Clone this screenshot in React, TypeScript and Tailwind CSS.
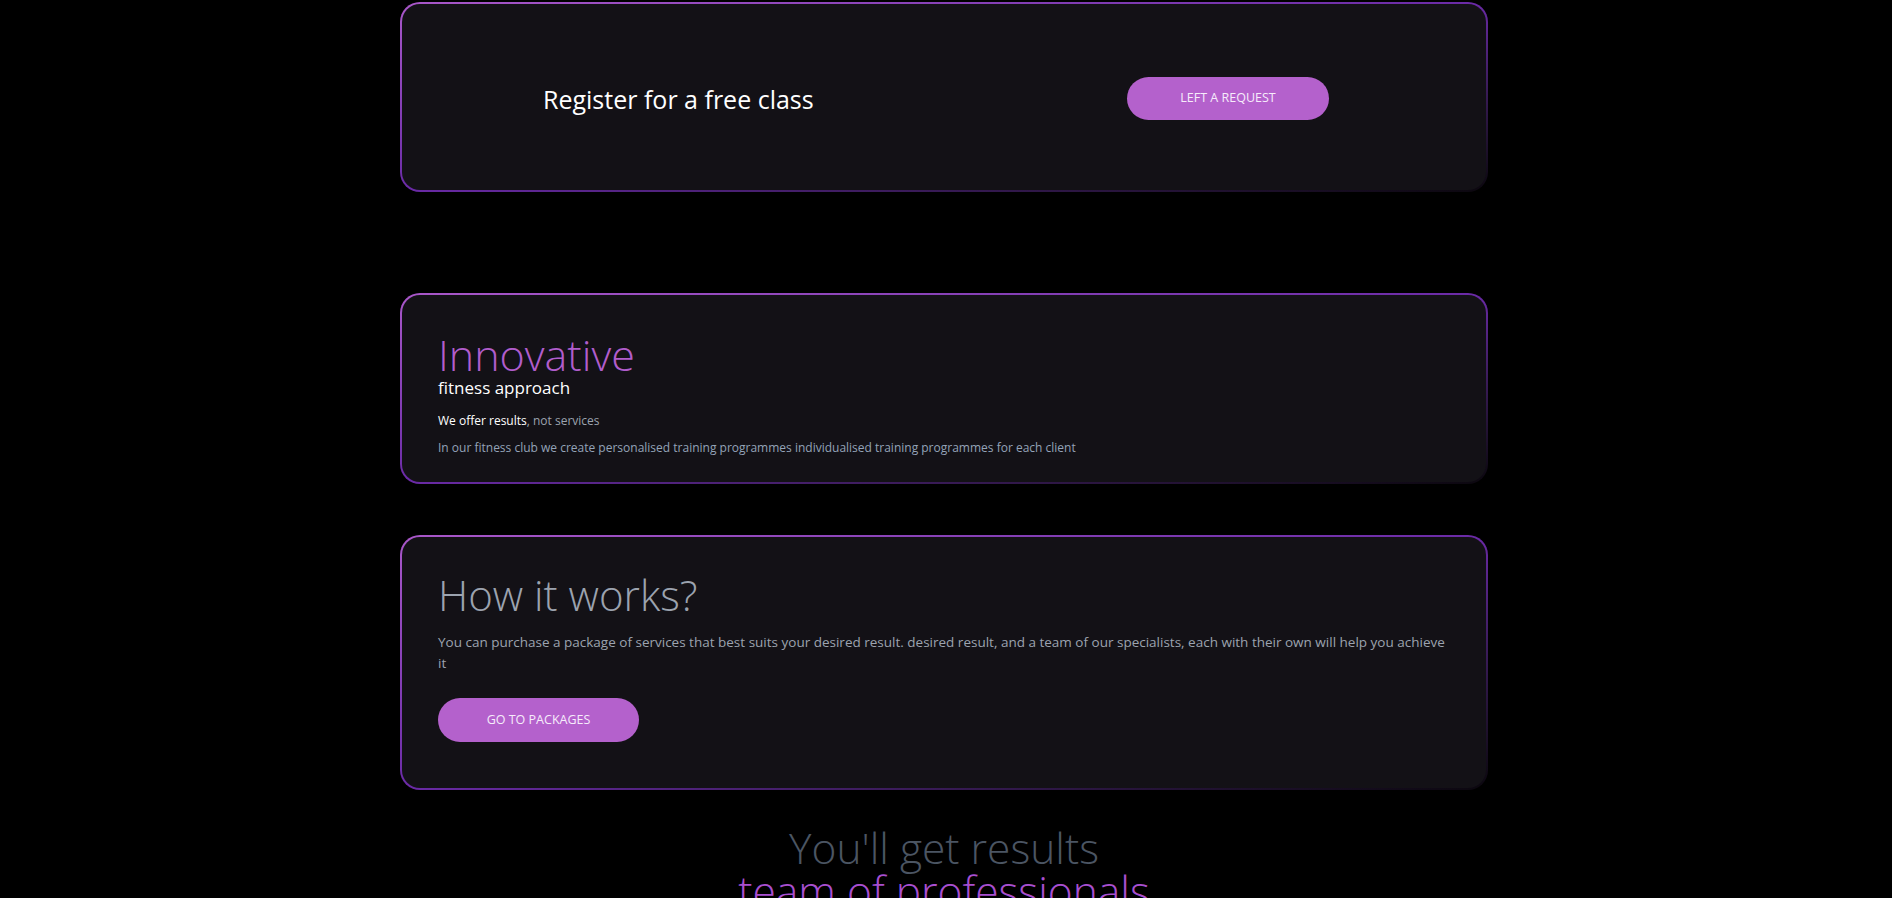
import React from "react";

const font = { fontFamily: '"Open Sans", "Noto Sans", sans-serif' };

function Card({ children, className = "" }: { children: React.ReactNode; className?: string }) {
  return (
    <div className="rounded-[20px] bg-gradient-to-br from-[#a957c9] via-[#6a2aa6] to-[#0b070e] p-[2px] shadow-[6px_6px_12px_rgba(0,0,0,0.6)]">
      <div className={"rounded-[18px] bg-[#131116] " + className}>{children}</div>
    </div>
  );
}

export default function App() {
  return (
    <div className="min-h-[898px] w-full overflow-hidden bg-black" style={font}>
      <div className="mx-auto w-[1092px] pr-[4px]">
        <div className="flex flex-col pt-[2px]">
          <Card className="flex h-[186px] items-center justify-between pl-[141px] pr-[157px]">
            <div className="pt-[4px] text-[25px] leading-none text-white">Register for a free class</div>
            <button className="mt-[2px] flex h-[43px] w-[202px] items-center justify-center rounded-full bg-[#b461cc] text-[12.5px] text-[#f6ecfb]">
              LEFT A REQUEST
            </button>
          </Card>

          <div className="h-[101px]" />

          <Card className="px-[36px] pt-[38px] pb-[28px]">
            <div className="text-[43px] font-light leading-none text-[#b15dcc]">Innovative</div>
            <div className="mt-[3px] text-[17px] leading-none text-white">fitness approach</div>
            <div className="mt-[19px] text-[12px] leading-none text-[#9ca3af]">
              <span className="text-white">We offer results</span>, not services
            </div>
            <div className="mt-[15px] text-[12px] leading-none text-[#94a3b8]">
              In our fitness club we create personalised training programmes individualised training programmes for each client
            </div>
          </Card>

          <div className="h-[51px]" />

          <Card className="px-[36px] pt-[37px] pb-[46px]">
            <div className="text-[42px] font-light leading-none text-[#9ca3af]">How it works?</div>
            <p className="mt-[16px] text-[13.5px] leading-[21px] text-[#9ca3af]">
              You can purchase a package of services that best suits your desired result. desired result, and a team of our specialists, each with their own will help you achieve it
            </p>
            <button className="mt-[24px] flex h-[44px] w-[201px] items-center justify-center rounded-full bg-[#b461cc] text-[12.5px] text-[#f6ecfb]">
              GO TO PACKAGES
            </button>
          </Card>

          <div className="mt-[37px] flex flex-col items-center">
            <div className="text-[42.5px] font-light leading-none text-[#4b5563]">You'll get results</div>
            <div className="text-[42.5px] font-light leading-none text-[#a84fd0]">team of professionals</div>
          </div>
        </div>
      </div>
    </div>
  );
}
